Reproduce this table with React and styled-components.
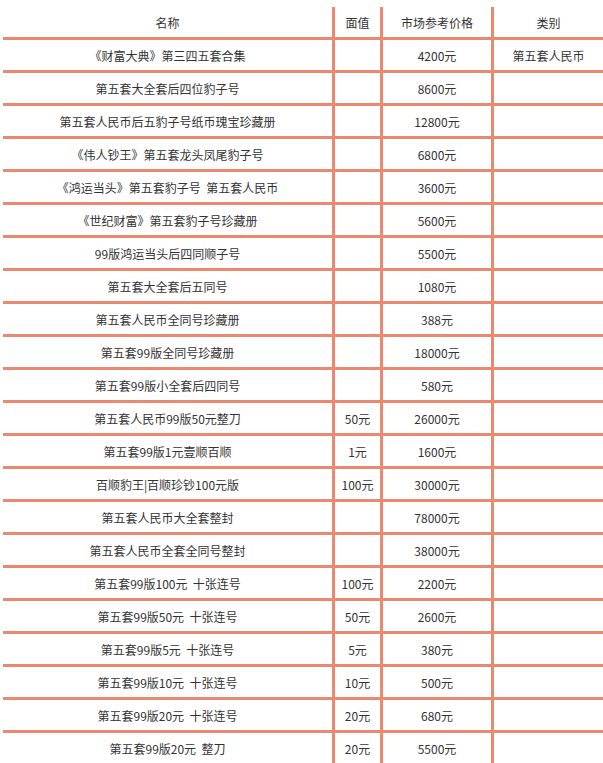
import React from 'react';
import styled, { createGlobalStyle } from 'styled-components';

const GlobalStyle = createGlobalStyle`
  body {
    margin: 0;
    background: #fff;
    font-family: "Noto Sans CJK SC", "Liberation Sans", sans-serif;
    font-size: 12px;
    color: #333;
  }
`;

const LINE = '#eb8870';

const Page = styled.div`
  padding: 7px 0 0 3px;
  width: 600px;
`;

const Row = styled.div`
  display: grid;
  grid-template-columns: 329px 48px 111px 112px;
  border-bottom: 3px solid ${LINE};
`;

const Cell = styled.div`
  box-sizing: border-box;
  height: 30px;
  display: flex;
  align-items: center;
  justify-content: center;
  white-space: pre;
  border-left: ${(p) => (p.$first ? 'none' : `3px solid ${LINE}`)};
`;

const rows = [
  ['《财富大典》第三四五套合集', '', '4200元', '第五套人民币'],
  ['第五套大全套后四位豹子号', '', '8600元', ''],
  ['第五套人民币后五豹子号纸币瑰宝珍藏册', '', '12800元', ''],
  ['《伟人钞王》第五套龙头凤尾豹子号', '', '6800元', ''],
  ['《鸿运当头》第五套豹子号  第五套人民币', '', '3600元', ''],
  ['《世纪财富》第五套豹子号珍藏册', '', '5600元', ''],
  ['99版鸿运当头后四同顺子号', '', '5500元', ''],
  ['第五套大全套后五同号', '', '1080元', ''],
  ['第五套人民币全同号珍藏册', '', '388元', ''],
  ['第五套99版全同号珍藏册', '', '18000元', ''],
  ['第五套99版小全套后四同号', '', '580元', ''],
  ['第五套人民币99版50元整刀', '50元', '26000元', ''],
  ['第五套99版1元壹顺百顺', '1元', '1600元', ''],
  ['百顺豹王|百顺珍钞100元版', '100元', '30000元', ''],
  ['第五套人民币大全套整封', '', '78000元', ''],
  ['第五套人民币全套全同号整封', '', '38000元', ''],
  ['第五套99版100元  十张连号', '100元', '2200元', ''],
  ['第五套99版50元  十张连号', '50元', '2600元', ''],
  ['第五套99版5元  十张连号', '5元', '380元', ''],
  ['第五套99版10元  十张连号', '10元', '500元', ''],
  ['第五套99版20元  十张连号', '20元', '680元', ''],
  ['第五套99版20元  整刀', '20元', '5500元', ''],
];

const header = ['名称', '面值', '市场参考价格', '类别'];

function TableRow({ cells }) {
  return (
    <Row>
      {cells.map((c, i) => (
        <Cell key={i} $first={i === 0}>
          {c}
        </Cell>
      ))}
    </Row>
  );
}

export default function App() {
  return (
    <>
      <GlobalStyle />
      <Page>
        <TableRow cells={header} />
        {rows.map((r, i) => (
          <TableRow key={i} cells={r} />
        ))}
      </Page>
    </>
  );
}
